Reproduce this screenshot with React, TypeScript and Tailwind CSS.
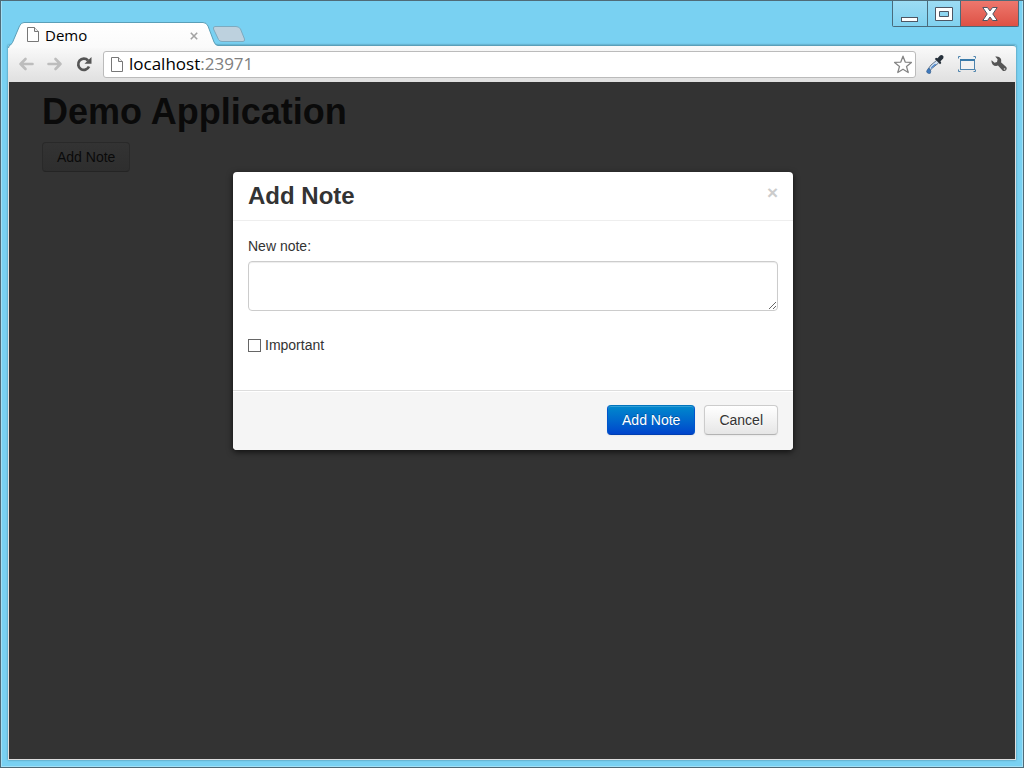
import type { ReactNode } from "react";

function PageIcon() {
  return (
    <svg width="12" height="15" viewBox="0 0 12 15" className="shrink-0" aria-hidden="true">
      <path d="M.5.5h7l4 4v10H.5z" fill="#fff" stroke="#777" />
      <path d="M7.5.5v4h4" fill="#eee" stroke="#777" />
    </svg>
  );
}

function ToolButton({ label, children }: { label: string; children: ReactNode }) {
  return (
    <button aria-label={label} className="flex h-5 w-5 shrink-0 items-center justify-center">
      {children}
    </button>
  );
}

function TitleBar() {
  return (
    <div className="flex h-[44px] items-end pl-1.5">
      <div className="relative flex h-[23px] w-[208px] items-center pr-3.5 pl-[19px]">
        <svg className="absolute top-0 left-0" width="210" height="26" viewBox="0 0 210 26" aria-hidden="true">
          <defs>
            <linearGradient id="tab" x1="0" y1="0" x2="0" y2="1">
              <stop offset="0" stopColor="#fff" />
              <stop offset="1" stopColor="#fafafa" />
            </linearGradient>
          </defs>
          <path
            d="M0 26Q.5 23.500 2.500 23L4.500 20.500 11.500 4Q13 .5 16 .5H195Q198.500.5 200 4L206 20Q207.500 23.500 210 23.500V26Z"
            fill="url(#tab)"
          />
          <path
            d="M.5 26Q.5 23.500 2.500 23L4.500 20.500 11.500 4Q13 .5 16 .5H195Q198.500.5 200 4L206 20Q207.500 23.500 210 23.500"
            fill="none"
            stroke="#5b9fb8"
          />
        </svg>
        <div className="relative flex flex-1 items-center pt-0.5 font-['Open_Sans',sans-serif]">
          <PageIcon />
          <span className="flex-1 pl-1.5 text-[15px] leading-5 text-black">Demo</span>
          <button aria-label="Close tab" className="flex h-4 w-4 items-center justify-center pt-0.5">
            <svg width="8" height="8" viewBox="0 0 8 8" aria-hidden="true">
              <path d="M.8.8l6.400 6.400M7.200.8L.8 7.200" stroke="#a3a3a3" strokeWidth="1.600" />
            </svg>
          </button>
        </div>
      </div>
      <button aria-label="New tab" className="mb-0.5 -ml-1">
        <svg width="34" height="17" viewBox="0 0 34 17" aria-hidden="true">
          <path
            d="M3 .5H24Q27 .5 28.500 3L32.500 13Q33 15.500 31 15.500H10Q7.500 15.500 6.500 13.500L1.500 3Q1 .5 3 .5Z"
            fill="#bdd1de"
            stroke="#7eaabf"
          />
        </svg>
      </button>
      <div className="mr-[3px] ml-auto flex h-[26px] self-start rounded-b-[2px] border border-t-0 border-[#496b7c]">
        <button aria-label="Minimize" className="flex w-[34px] items-end justify-center bg-linear-to-b from-[#9cdcf4] to-[#80d1ef] pb-1">
          <svg width="18" height="5" viewBox="0 0 18 5" aria-hidden="true">
            <rect x=".5" y=".5" width="16" height="4" fill="#fff" stroke="#4d5664" />
          </svg>
        </button>
        <button aria-label="Maximize" className="flex w-[34px] items-center justify-center border-x border-[#496b7c] bg-linear-to-b from-[#9cdcf4] to-[#80d1ef]">
          <svg width="18" height="14" viewBox="0 0 18 14" aria-hidden="true">
            <path d="M.5.5h17v13H.5zM4.500 4.500v5h9v-5z" fill="#fff" fillRule="evenodd" stroke="#4d5664" />
          </svg>
        </button>
        <button aria-label="Close window" className="flex w-[57px] items-center justify-center bg-linear-to-b from-[#ed776d] to-[#de5145]">
          <svg width="16" height="14" viewBox="0 0 16 14" aria-hidden="true">
            <path
              d="M.8.5H5.500L8 4 10.500.5H15.200L10.800 7 15.200 13.500H10.500L8 10 5.500 13.500H.8L5.200 7Z"
              fill="#fff"
              stroke="#4d5664"
            />
          </svg>
        </button>
      </div>
    </div>
  );
}

function Toolbar() {
  return (
    <div className="flex h-[37px] items-center gap-[9px] rounded-t-[3px] border-t border-[#5b9fb8] bg-linear-to-b from-[#fafafa] to-[#e0e0e0] pr-[7px] pl-2">
      <ToolButton label="Back">
        <svg width="16" height="14" viewBox="0 0 16 14" aria-hidden="true">
          <path d="M7.500 2L2.500 7l5 5M2.500 7H14.500" fill="none" stroke="#bdbdbd" strokeWidth="2.600" strokeLinecap="round" strokeLinejoin="round" />
        </svg>
      </ToolButton>
      <ToolButton label="Forward">
        <svg width="16" height="14" viewBox="0 0 16 14" aria-hidden="true">
          <path d="M8.500 2l5 5-5 5M13.500 7H1.500" fill="none" stroke="#bdbdbd" strokeWidth="2.600" strokeLinecap="round" strokeLinejoin="round" />
        </svg>
      </ToolButton>
      <ToolButton label="Reload">
        <svg width="16" height="15" viewBox="0 0 16 15" aria-hidden="true">
          <path d="M12 3.500A5.600 5.600 0 1 0 13 9.500" fill="none" stroke="#555" strokeWidth="2.700" />
          <path d="M15.500 0V6.800H8.500Z" fill="#555" />
        </svg>
      </ToolButton>
      <div className="flex h-[27px] flex-1 items-center rounded-[3px] border border-[#bbb] bg-white pr-0.5 pl-[7px] font-['Open_Sans',sans-serif] text-[17px] leading-6">
        <PageIcon />
        <a href="#" aria-label="localhost:23971" className="flex-1 pl-1.5 text-black">
          localhost<span className="text-[#808080]">:23971</span>
        </a>
        <button aria-label="Bookmark this page">
          <svg width="20" height="19" viewBox="0 0 20 19" aria-hidden="true">
            <path
              d="M10 1.200l2.200 5.900 6.200.3-4.900 4 1.700 6.100L10 14.200l-5.200 3.300 1.700-6.100-4.900-4 6.200-.3z"
              fill="#fff"
              stroke="#858585"
              strokeWidth="1.300"
              strokeLinejoin="round"
            />
          </svg>
        </button>
      </div>
      <div className="flex gap-3">
        <ToolButton label="Color picker">
          <svg width="20" height="20" viewBox="0 0 20 20" aria-hidden="true">
            <path d="M11.500 6.500L6 11Q4 13 3.500 16l1.700.3L7.500 14 13.500 9" fill="#cfe0f2" stroke="#65758a" strokeWidth="1" />
            <path d="M9.500 10.300L6.500 13 5.500 15 7.500 13.500 11.500 10z" fill="#3678c8" />
            <path d="M9.800 5L15 10.200l1.300-1.300-.8-1.700 2.700-2.700q1-2-.4-3T15 1.500L12.500 4.200 11 3.800z" fill="#27313b" />
            <path d="M3.700 14Q1.500 16.500 1.600 17.700T3.700 19.500 5.800 17.700 3.700 14Z" fill="#3e79bd" stroke="#315987" strokeWidth=".6" />
          </svg>
        </ToolButton>
        <ToolButton label="Capture window">
          <svg width="20" height="18" viewBox="0 0 20 18" aria-hidden="true">
            <path d="M1.500 3.500V1.500H3.500M16.500 1.500h2v2M1.500 14.500v2h2M16.500 16.500h2v-2" fill="none" stroke="#4d83ad" />
            <rect x="3.500" y="4.500" width="14" height="10" fill="#f2f2f2" stroke="#4d83ad" />
            <path d="M3 5h15" stroke="#397aaa" strokeWidth="2" />
          </svg>
        </ToolButton>
        <ToolButton label="Menu">
          <svg width="16" height="16" viewBox="0 0 16 16" aria-hidden="true">
            <path
              d="M4.200.6Q8-.2 9.700 2.600 10.600 4.500 10 6.200L15.200 10.900Q16.300 12.300 15.200 13.900T12 14.900L7 9.600Q3.800 10.600 1.600 8.400.1 6.600.6 4.200L3.500 6.700 6 5.900 6.600 3.300Z"
              fill="#555"
            />
            <circle cx="13.500" cy="13" r=".8" fill="#ddd" />
          </svg>
        </ToolButton>
      </div>
    </div>
  );
}

function NoteDialog() {
  return (
    <div
      role="dialog"
      aria-labelledby="dialog-title"
      className="w-[560px] max-w-full overflow-hidden rounded-[4px] bg-white shadow-[0_2px_6px_rgba(0,0,0,0.7)]"
    >
      <div className="flex items-start justify-between border-b border-[#eee] px-[15px] py-[9px]">
        <h3 id="dialog-title" className="text-[24px] leading-[30px] font-bold text-[#333]">
          Add Note
        </h3>
        <button aria-label="Close" className="pt-0.5 text-[19px] leading-5 font-bold text-[#ccc]">
          ×
        </button>
      </div>
      <div className="px-[15px] pt-[15px] pb-[35px]">
        <label htmlFor="note" className="mb-[5px] block">
          New note:
        </label>
        <textarea
          id="note"
          className="block h-[50px] w-full resize rounded-[4px] border border-[#ccc] bg-white px-1.5 py-1 shadow-[inset_0_1px_1px_rgba(0,0,0,0.075)] outline-none"
        />
        <label className="mt-6 flex items-center gap-1">
          <input type="checkbox" className="h-[13px] w-[13px] appearance-none border border-[#666] bg-white" />
          Important
        </label>
      </div>
      <div className="flex justify-end gap-[9px] border-t border-[#ddd] bg-[#f5f5f5] px-[15px] pt-[14px] pb-[15px] shadow-[inset_0_1px_0_#fff]">
        <button className="h-[30px] rounded-[4px] border border-[#0055cc] border-t-[#0074bd] border-b-[#003fb0] bg-linear-to-b from-[#0088cc] to-[#0044cc] px-[14px] text-white shadow-[inset_0_1px_0_rgba(255,255,255,0.2),0_1px_2px_rgba(0,0,0,0.05)] [text-shadow:0_-1px_0_rgba(0,0,0,0.25)]">
          Add Note
        </button>
        <button className="h-[30px] rounded-[4px] border border-[#ccc] border-b-[#b3b3b3] bg-linear-to-b from-white to-[#e6e6e6] px-[14px] text-[#333] shadow-[inset_0_1px_0_rgba(255,255,255,0.2),0_1px_2px_rgba(0,0,0,0.05)] [text-shadow:0_1px_1px_rgba(255,255,255,0.75)]">
          Cancel
        </button>
      </div>
    </div>
  );
}

export default function App() {
  return (
    <div className="flex min-h-screen flex-col border border-[#4f6b78] bg-[#79d1f2] font-['Liberation_Sans',Arial,sans-serif] text-[14px] leading-5 text-[#333]">
      <div className="flex flex-1 flex-col border border-t-0 border-[#a4e0f6]">
        <TitleBar />
        <div className="mx-1.5 mb-1.5 flex flex-1 flex-col shadow-[0_0_2px_#447d95]">
          <Toolbar />
          <main className="relative flex-1 border border-t-0 border-[#dedede] bg-[#333] px-[33px] pt-[10px]">
            <h1 className="text-[36px] leading-10 font-bold text-[#0a0a0a]">Demo Application</h1>
            <button className="mt-[10px] h-[30px] rounded-[4px] border border-[#292929] border-b-[#242424] bg-linear-to-b from-[#333] to-[#2e2e2e] px-[14px] text-[#0a0a0a]">
              Add Note
            </button>
            <div className="absolute inset-0 flex items-start justify-center pt-[90px] pl-0.5">
              <NoteDialog />
            </div>
          </main>
        </div>
      </div>
    </div>
  );
}
